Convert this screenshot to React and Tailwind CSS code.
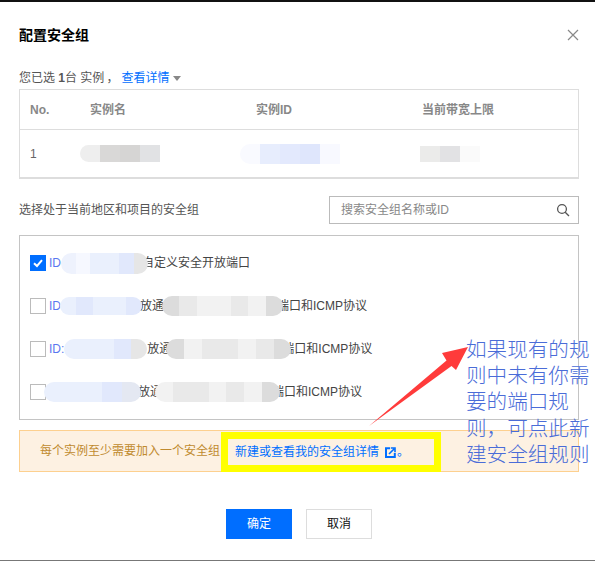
import React from "react";

function Blob({ className, segs }) {
  return (
    <span className={"relative z-10 flex shrink-0 overflow-hidden rounded-full " + className}>
      {segs.map((c, i) => (
        <span key={i} className={"flex-1 " + c} />
      ))}
    </span>
  );
}

const blue1 = "bg-[#f6f8ff]";
const blue2 = "bg-[#eaf0fd]";
const blue3 = "bg-[#e1e8fc]";
const g1 = "bg-[#f2f2f2]";
const g2 = "bg-[#e9e9e9]";
const g3 = "bg-[#dcdcdc]";

function Check({ on }) {
  if (on) {
    return (
      <span className="flex h-[16px] w-[16px] shrink-0 items-center justify-center bg-[#006eff]">
        <svg width="12" height="12" viewBox="0 0 12 12" fill="none">
          <path d="M2 6.2 L5 9 L10 3.2" stroke="#fff" strokeWidth="2" />
        </svg>
      </span>
    );
  }
  return <span className="h-[16px] w-[16px] shrink-0 border border-[#bbbbbb] bg-white" />;
}

function Row({ on, children }) {
  return (
    <div className="flex h-[16px] items-center gap-[3px] whitespace-nowrap text-[12px] leading-[16px] text-[#444444]">
      <Check on={on} />
      {children}
    </div>
  );
}

function Id({ children }) {
  return <span className="text-[#5a78f0]">{children}</span>;
}

export default function App() {
  return (
    <div className="relative flex h-[561px] w-[595px] flex-col overflow-hidden bg-white font-['Liberation_Sans','Noto_Sans_CJK_SC',sans-serif] text-[12px]">
      <div className="h-[2px] shrink-0 bg-[#111111]" />

      <div className="mt-[21px] flex h-[24px] shrink-0 items-center justify-between pl-[19px] pr-[16px]">
        <span className="text-[14px] font-bold text-black">配置安全组</span>
        <svg width="12" height="12" viewBox="0 0 12 12" fill="none">
          <path d="M1 1 L11 11 M11 1 L1 11" stroke="#888888" strokeWidth="1.2" />
        </svg>
      </div>

      <div className="mt-[22px] flex h-[18px] items-center pl-[19px] leading-[18px] text-[#555555]">
        <span>您已选 <b className="font-bold">1</b>台 实例</span>
        <span className="ml-[2px] mr-[3px]">，</span>
        <span className="text-[#006eff]">查看详情</span>
        <svg className="ml-[4px]" width="8" height="5" viewBox="0 0 8 5">
          <path d="M0 0 H8 L4 5 Z" fill="#888888" />
        </svg>
      </div>

      <div className="ml-[19px] mr-[16px] mt-[2px] h-[90px] border-[1px] border-b-2 border-[#dddddd]">
        <div className="grid h-[40px] grid-cols-[60px_166px_166px_1fr] items-center border-b border-[#dddddd] pl-[10px] font-bold text-[#888888]">
          <span>No.</span>
          <span>实例名</span>
          <span>实例ID</span>
          <span>当前带宽上限</span>
        </div>
        <div className="grid h-[47px] grid-cols-[60px_166px_166px_1fr] items-center pl-[10px] text-[#666666]">
          <span>1</span>
          <Blob className="-ml-[10px] h-[17px] w-[80px] rounded-r-none" segs={["bg-[#eeeeee]", "bg-[#d9d8d7]", "bg-[#d6d5d4]", "bg-[#e1e2e4]"]} />
          <Blob className="-ml-[16px] h-[20px] w-[100px] rounded-r-none" segs={["bg-[#f9faff]", "bg-[#e7edfd]", "bg-[#e3e9fd]", "bg-[#dfe6fc]", "bg-[#f8f9ff]"]} />
          <Blob className="-ml-[2px] h-[16px] w-[60px] rounded-none" segs={["bg-[#ebebea]", "bg-[#e2e2e4]", "bg-[#fafafa]"]} />
        </div>
      </div>

      <div className="ml-[19px] mr-[16px] mt-[17px] flex h-[28px] items-center justify-between">
        <span className="text-[#555555]">选择处于当前地区和项目的安全组</span>
        <div className="flex h-[28px] w-[250px] items-center justify-between border border-[#bbbbbb] pl-[11px] pr-[8px]">
          <span className="text-[#888888]">搜索安全组名称或ID</span>
          <svg width="14" height="14" viewBox="0 0 14 14" fill="none">
            <circle cx="6" cy="6" r="4.4" stroke="#555555" strokeWidth="1.3" />
            <path d="M9.2 9.2 L13 13" stroke="#555555" strokeWidth="1.3" />
          </svg>
        </div>
      </div>

      <div className="ml-[19px] mr-[16px] mt-[11px] flex h-[185px] flex-col gap-[27px] border border-[#c4c4c4] pl-[10px] pt-[19px]">
        <Row on>
          <Id>ID</Id>
          <Blob className="-ml-[3px] -mr-[9px] h-[21px] w-[87px]" segs={["bg-[#eef2fd]", blue1, blue2, blue2, blue3, "bg-[#e6e6e6]"]} />
          <span>自定义安全开放端口</span>
        </Row>
        <Row>
          <Id>ID</Id>
          <Blob className="-ml-[4px] -mr-[5px] h-[18px] w-[82px]" segs={[blue2, blue3, blue2, blue2, blue3]} />
          <span>放通</span>
          <Blob className="-ml-[5px] -mr-[9px] h-[20px] w-[121px]" segs={[g3, g2, g1, g1, g2, g1, g3]} />
          <span>端口和ICMP协议</span>
        </Row>
        <Row>
          <Id>ID:</Id>
          <Blob className="-ml-[3px] -mr-[3px] h-[20px] w-[83px]" segs={[blue2, blue2, blue2, blue3, "bg-[#e6e6e6]"]} />
          <span>放通</span>
          <Blob className="-ml-[8px] -mr-[12px] h-[20px] w-[125px]" segs={[g3, g1, g2, g2, g1, g2, g3]} />
          <span>端口和ICMP协议</span>
        </Row>
        <Row>
          <Blob className="-ml-[5px] -mr-[6px] h-[20px] w-[97px]" segs={[blue2, blue2, blue2, blue3, "bg-[#e4e8f2]"]} />
          <span>放通</span>
          <Blob className="-ml-[10px] -mr-[11px] h-[20px] w-[125px]" segs={[g1, g2, g2, g1, g2, g1, g3]} />
          <span>端口和ICMP协议</span>
        </Row>
      </div>

      <div className="ml-[19px] mr-[16px] mt-[10px] flex h-[42px] items-end border border-[#fdd08f] bg-[#fdf1e2] pl-[20px]">
        <span className="mb-[11px] w-[181px] shrink-0 whitespace-nowrap text-[#c08a2e]">每个实例至少需要加入一个安全组</span>
        <div className="-mb-[1px] flex h-[40px] w-[220px] shrink-0 items-center border-[7px] border-[#ffff00] pl-[7px]">
          <span className="text-[#006eff]">新建或查看我的安全组详情</span>
          <svg className="ml-[6px]" width="11" height="11" viewBox="0 0 11 11" fill="none">
            <path d="M5 1.2 H1 V10 H9.8 V6" stroke="#006eff" strokeWidth="2" />
            <path d="M4 7 L9 2 M5.8 1 H10 V5.2" stroke="#006eff" strokeWidth="1.6" />
          </svg>
          <span className="ml-[1px] text-[#006eff]">。</span>
        </div>
      </div>

      <div className="mt-[37px] flex justify-center gap-[14px] pl-[3px]">
        <div className="flex h-[30px] w-[66px] items-center justify-center bg-[#006eff] text-white">确定</div>
        <div className="flex h-[30px] w-[66px] items-center justify-center border border-[#dddddd] bg-white text-[#111111]">取消</div>
      </div>

      <div className="absolute bottom-0 left-0 right-0 h-[1px] bg-[#777777]" />

      <svg className="absolute left-[360px] top-[340px]" width="115" height="92" viewBox="360 340 115 92">
        <path d="M468 347 L442 353 L446.5 360.5 L369 426 L451.5 366 L456 370 Z" fill="#ff3b3b" />
      </svg>

      <div className="absolute left-[466px] top-[335px] z-20 w-[129px] font-['Noto_Sans_CJK_SC',sans-serif] text-[20.6px] font-light leading-[26.2px] text-[#4a6cd8]">
        如果现有的规<br />则中未有你需<br />要的端口规<br />则，可点此新<br />建安全组规则
      </div>
    </div>
  );
}
